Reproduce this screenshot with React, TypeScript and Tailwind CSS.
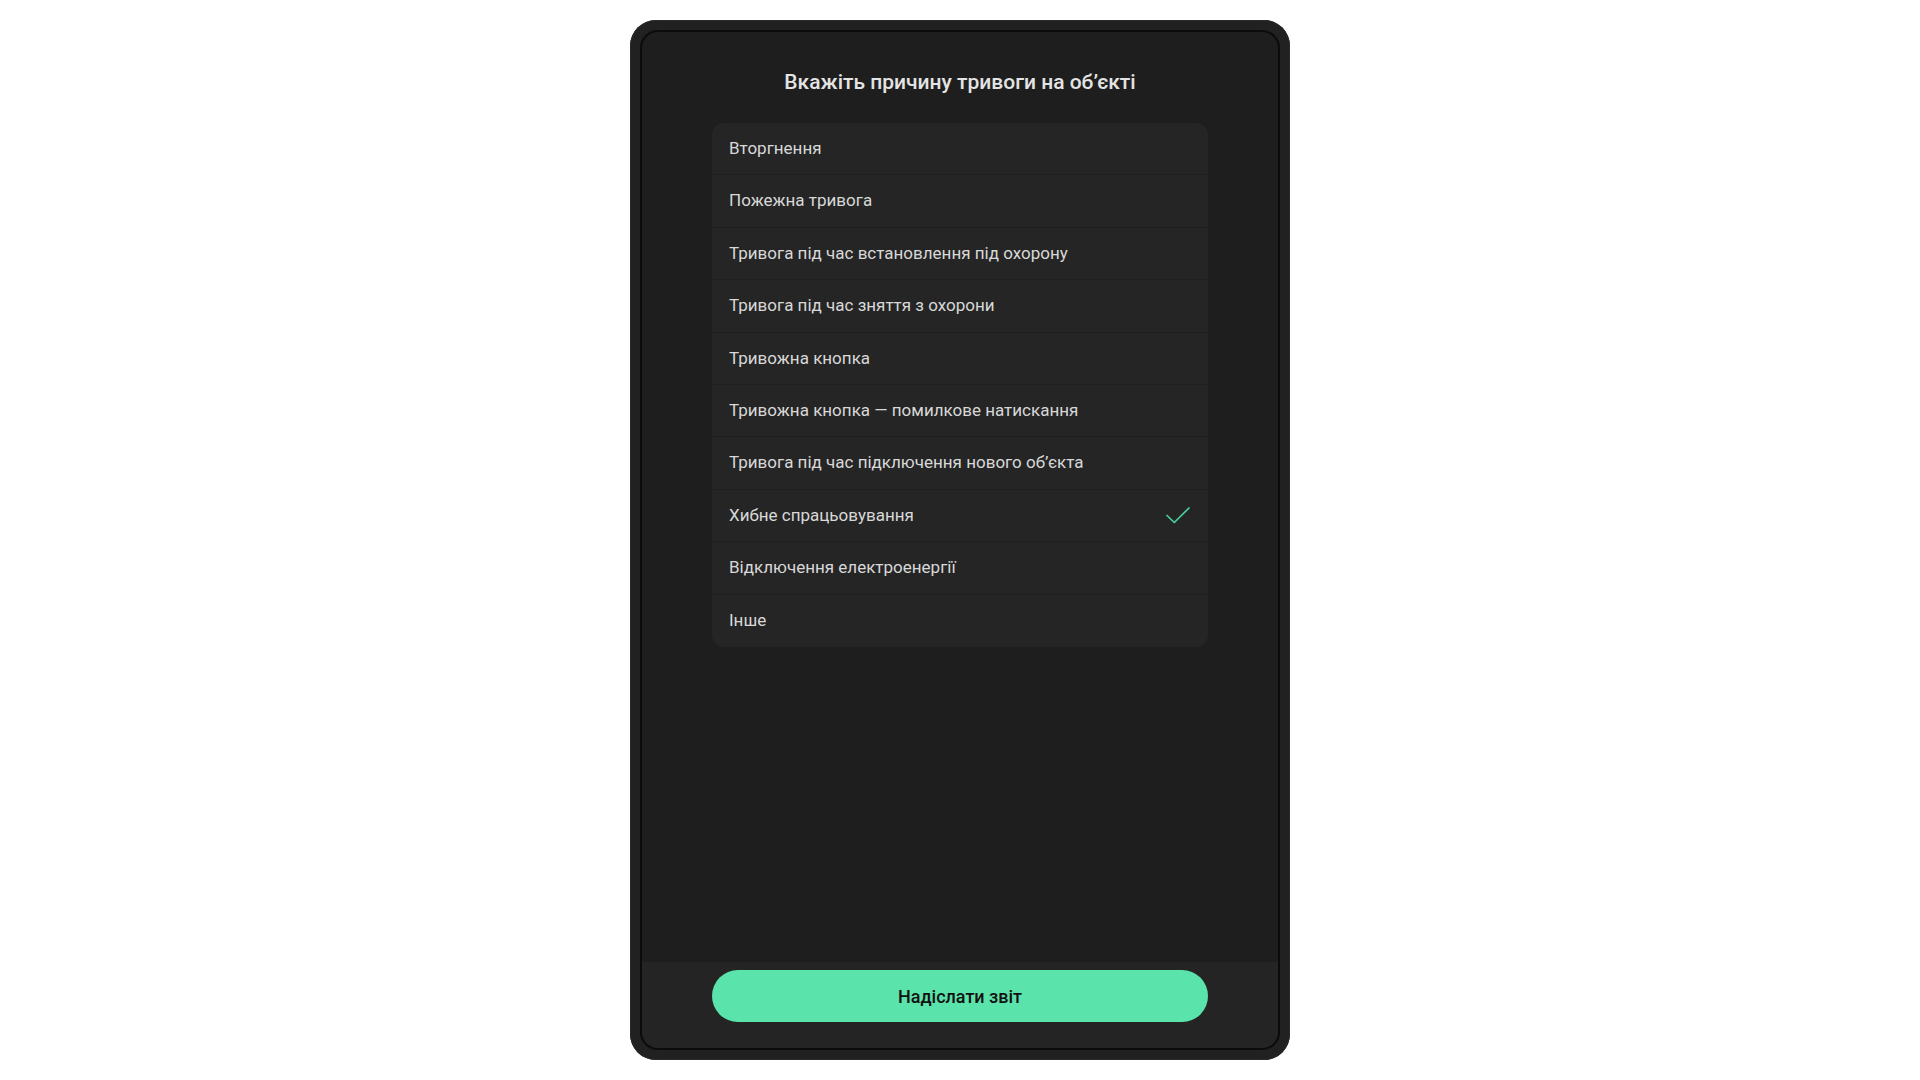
const REASONS = [
  'Вторгнення',
  'Пожежна тривога',
  'Тривога під час встановлення під охорону',
  'Тривога під час зняття з охорони',
  'Тривожна кнопка',
  'Тривожна кнопка — помилкове натискання',
  'Тривога під час підключення нового об’єкта',
  'Хибне спрацьовування',
  'Відключення електроенергії',
  'Інше',
];

const SELECTED = 7;

function CheckMark() {
  return (
    <svg className="w-[24px] h-[17px] flex-shrink-0" viewBox="0 0 24 17" fill="none">
      <path
        d="M1 8.5 8.3 15.5 23 1"
        stroke="#46d39a"
        strokeWidth={1.7}
        strokeLinecap="round"
        strokeLinejoin="round"
      />
    </svg>
  );
}

export default function App() {
  return (
    <div className="w-full h-screen bg-white flex justify-center pt-[20px] font-['Roboto',sans-serif]">
      <div className="w-[660px] h-[1040px] rounded-[26px] bg-[#212121] p-[10px] shadow-[inset_0_0_0_1px_#2a2a2a]">
        <div className="h-full w-full rounded-[18px] border-2 border-[#0b0b0b] bg-[#1e1e1e] overflow-hidden flex flex-col">
          <h1 className="pt-[36px] text-center text-[21px] leading-[29px] font-medium text-[#e4e4e4]">
            Вкажіть причину тривоги на об’єкті
          </h1>
          <div className="mt-[26px] mx-auto w-[496px] rounded-[12px] bg-[#252525] overflow-hidden divide-y divide-[#1f1f1f]">
            {REASONS.map((reason, index) => (
              <div key={index} className="h-[52.4px] flex items-center justify-between pl-[17px] pr-[18px]">
                <span className="text-[17px] text-[#d8d8d8]">{reason}</span>
                {index === SELECTED && <CheckMark />}
              </div>
            ))}
          </div>
          <div className="flex-1" />
          <div className="bg-[#242424] pt-[8px] pb-[26px] flex justify-center">
            <button className="w-[496px] h-[52px] rounded-full bg-[#5ae3ab] text-[18px] font-medium text-[#111]">
              Надіслати звіт
            </button>
          </div>
        </div>
      </div>
    </div>
  );
}
